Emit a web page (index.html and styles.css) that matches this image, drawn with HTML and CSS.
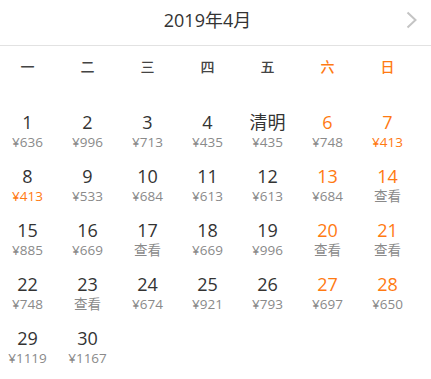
FILE: index.html
```html
<!DOCTYPE html>
<html lang="zh">
<head>
<meta charset="utf-8">
<link rel="stylesheet" href="styles.css">
</head>
<body>
<div class="cal">
  <div class="head">
    <div class="title">2019年4月</div>
    <svg class="next" width="12" height="18" viewBox="0 0 12 18"><path d="M1.5 1.5 L9.5 9 L1.5 16.5" fill="none" stroke="#c4c4c4" stroke-width="2"/></svg>
  </div>
  <div class="week">
    <span>一</span><span>二</span><span>三</span><span>四</span><span>五</span><span class="we">六</span><span class="we">日</span>
  </div>
  <div class="grid">
    <div class="cell"><b>1</b><i>¥636</i></div>
    <div class="cell"><b>2</b><i>¥996</i></div>
    <div class="cell"><b>3</b><i>¥713</i></div>
    <div class="cell"><b>4</b><i>¥435</i></div>
    <div class="cell"><b>清明</b><i>¥435</i></div>
    <div class="cell we"><b>6</b><i>¥748</i></div>
    <div class="cell we"><b>7</b><i class="low">¥413</i></div>

    <div class="cell"><b>8</b><i class="low">¥413</i></div>
    <div class="cell"><b>9</b><i>¥533</i></div>
    <div class="cell"><b>10</b><i>¥684</i></div>
    <div class="cell"><b>11</b><i>¥613</i></div>
    <div class="cell"><b>12</b><i>¥613</i></div>
    <div class="cell we"><b>13</b><i>¥684</i></div>
    <div class="cell we"><b>14</b><i>查看</i></div>

    <div class="cell"><b>15</b><i>¥885</i></div>
    <div class="cell"><b>16</b><i>¥669</i></div>
    <div class="cell"><b>17</b><i>查看</i></div>
    <div class="cell"><b>18</b><i>¥669</i></div>
    <div class="cell"><b>19</b><i>¥996</i></div>
    <div class="cell we"><b>20</b><i>查看</i></div>
    <div class="cell we"><b>21</b><i>查看</i></div>

    <div class="cell"><b>22</b><i>¥748</i></div>
    <div class="cell"><b>23</b><i>查看</i></div>
    <div class="cell"><b>24</b><i>¥674</i></div>
    <div class="cell"><b>25</b><i>¥921</i></div>
    <div class="cell"><b>26</b><i>¥793</i></div>
    <div class="cell we"><b>27</b><i>¥697</i></div>
    <div class="cell we"><b>28</b><i>¥650</i></div>

    <div class="cell"><b>29</b><i>¥1119</i></div>
    <div class="cell"><b>30</b><i>¥1167</i></div>
  </div>
</div>
</body>
</html>
```

FILE: styles.css
```css
html, body {
  margin: 0;
  padding: 0;
  background: #fff;
}
body {
  font-family: "Open Sans", "Noto Sans CJK SC", sans-serif;
  color: #333;
  width: 431px;
  overflow: hidden;
}
.head {
  height: 45px;
  border-bottom: 1px solid #e2e2e2;
  display: flex;
  align-items: center;
  position: relative;
}
.title {
  width: 415px;
  text-align: center;
  font-size: 18px;
  line-height: 24px;
  margin-top: -6px;
  color: #333;
}
.next {
  position: absolute;
  left: 406px;
  top: 11px;
}
.week {
  display: grid;
  grid-template-columns: repeat(7, 55px);
  column-gap: 5px;
  height: 40px;
  align-items: center;
  font-size: 14px;
  font-family: "Noto Sans CJK SC", sans-serif;
  font-weight: 500;
}
.week span {
  text-align: center;
  color: #444;
}
.week .we {
  color: #ff7a12;
}
.grid {
  display: grid;
  grid-template-columns: repeat(7, 55px);
  grid-auto-rows: 54px;
  column-gap: 5px;
  margin-top: 18px;
}
.cell {
  display: flex;
  flex-direction: column;
  align-items: center;
  padding-top: 8px;
}
.cell b {
  font-weight: normal;
  font-size: 18px;
  line-height: 20px;
  color: #333;
}
.cell i {
  font-style: normal;
  font-size: 13.5px;
  line-height: 20px;
  color: #8a8a8a;
}
.cell.we b {
  color: #ff7a12;
}
.cell i.low {
  color: #ff7a12;
}
```
